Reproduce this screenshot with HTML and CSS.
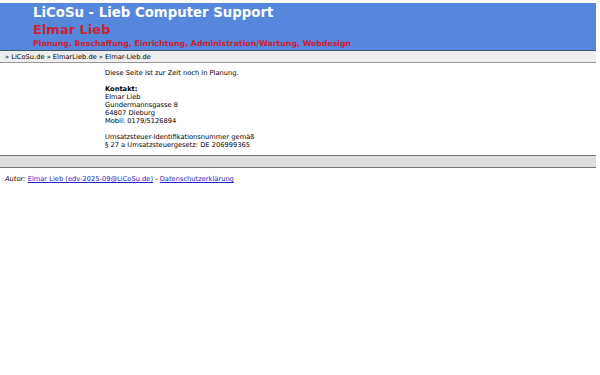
FILE: index.html
```html
<!DOCTYPE html>
<html lang="de">
<head>
  <meta charset="UTF-8" />
  <title>Elmar-Lieb.de</title>
  <link rel="stylesheet" href="styles.css">
</head>
<body>
  <div class="kopf">
    <h1>LiCoSu - Lieb Computer Support</h1>
    <h2>Elmar Lieb</h2>
    <h3>Planung, Beschaffung, Einrichtung, Administration/Wartung, Webdesign</h3>
  </div>
  <div class="pfad">
    &raquo; LiCoSu.de &raquo; ElmarLieb.de &raquo; Elmar-Lieb.de
  </div>
  <div class="inhalt">
    <p>Diese Seite ist zur Zeit noch in Planung.</p>
    <p>
      <b>Kontakt:</b><br>
      Elmar Lieb<br>
      Gundermannsgasse 8<br>
      64807 Dieburg<br>
      Mobil: 0179/5126894
    </p>
    <p>
      Umsatzsteuer-Identifikationsnummer gem&auml;&szlig;<br>
      &sect; 27 a Umsatzsteuergesetz: DE 206999365
    </p>
  </div>
  <div class="fussleiste"></div>
  <p class="autor">
    <i>Autor:</i> <a href="#">Elmar Lieb (edv-2025-09@LiCoSu.de)</a> - <a href="#">Datenschutzerkl&auml;rung</a>
  </p>
</body>
</html>
```

FILE: styles.css
```css
body {
  font-family: 'DejaVu Sans', sans-serif;
  font-size: 6.7px;
  line-height: 8px;
  color: #000;
  background-color: #fff;
  margin: 3px 4px 0 0;
}
.kopf {
  background-color: #5588dd;
  border-bottom: 1px solid #445566;
  padding: 1px 0 0 33px;
}
.kopf h1 {
  margin: 0;
  color: #fff;
  font-size: 13.3px;
  line-height: 17px;
}
.kopf h2 {
  margin: 0;
  color: #cc2233;
  font-size: 13px;
  line-height: 17px;
}
.kopf h3 {
  margin: 0;
  color: #cc2233;
  font-size: 7.8px;
  line-height: 12px;
}
.pfad {
  background-color: #eeeeee;
  border-bottom: 1px solid #999;
  padding: 2px 5px 1px;
}
.inhalt {
  padding: 6px 0 6px 105px;
}
.inhalt p {
  margin: 0 0 8px;
}
.inhalt p:last-child {
  margin-bottom: 0;
}
.fussleiste {
  background-color: #dddddd;
  border-top: 1px solid #777;
  border-bottom: 1px solid #777;
  height: 11px;
}
.autor {
  margin: 7px 5px;
}
.autor a {
  color: #2222cc;
}
```
